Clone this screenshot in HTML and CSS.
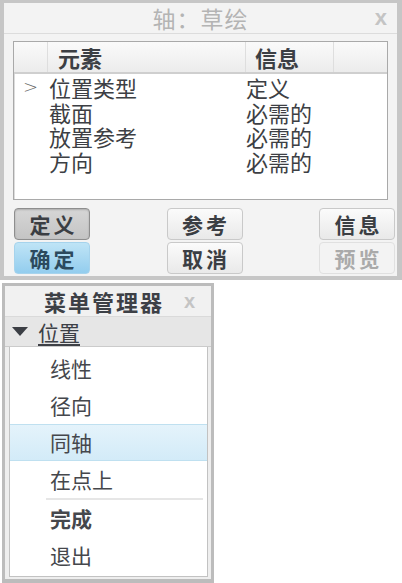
FILE: index.html
```html
<!DOCTYPE html>
<html lang="zh-CN">
<head>
    <meta charset="UTF-8">
    <title>轴: 草绘</title>
    <link rel="stylesheet" href="styles.css">
</head>
<body>
    <div class="dialog">
        <div class="dialog-title">
            <span class="title-text">轴：草绘</span>
            <span class="close">x</span>
        </div>

        <div class="table-box">
            <div class="table-head">
                <div class="col col-mark"></div>
                <div class="col col-name">元素</div>
                <div class="col col-info">信息</div>
                <div class="col col-rest"></div>
            </div>
            <div class="table-body">
                <div class="row">
                    <div class="col-mark mark">&gt;</div>
                    <div class="col-name">位置类型</div>
                    <div class="col-info">定义</div>
                </div>
                <div class="row">
                    <div class="col-mark"></div>
                    <div class="col-name">截面</div>
                    <div class="col-info">必需的</div>
                </div>
                <div class="row">
                    <div class="col-mark"></div>
                    <div class="col-name">放置参考</div>
                    <div class="col-info">必需的</div>
                </div>
                <div class="row">
                    <div class="col-mark"></div>
                    <div class="col-name">方向</div>
                    <div class="col-info">必需的</div>
                </div>
            </div>
        </div>

        <div class="buttons">
            <div class="btn-col">
                <button class="btn btn-pressed">定义</button>
                <button class="btn btn-blue">确定</button>
            </div>
            <div class="btn-col">
                <button class="btn">参考</button>
                <button class="btn">取消</button>
            </div>
            <div class="btn-col">
                <button class="btn">信息</button>
                <button class="btn btn-disabled">预览</button>
            </div>
        </div>
    </div>

    <div class="menu">
        <div class="menu-title">
            <span class="menu-title-text">菜单管理器</span>
            <span class="close menu-close">x</span>
        </div>
        <div class="menu-head">
            <span class="arrow"></span>
            <span class="menu-head-text">位置</span>
        </div>
        <div class="menu-list">
            <div class="menu-item">线性</div>
            <div class="menu-item">径向</div>
            <div class="menu-item selected">同轴</div>
            <div class="menu-item">在点上</div>
            <div class="menu-sep"></div>
            <div class="menu-item bold">完成</div>
            <div class="menu-item">退出</div>
        </div>
    </div>
</body>
</html>
```

FILE: styles.css
```css
* {
    margin: 0;
    padding: 0;
    box-sizing: border-box;
}

body {
    font-family: "Noto Sans CJK SC", "Noto Sans", sans-serif;
    background: #ffffff;
    color: #3a3d42;
    width: 402px;
    height: 583px;
    overflow: hidden;
}

.dialog {
    width: 402px;
    height: 280px;
    background: #f3f3f3;
    border: 4px solid #c6c6c6;
    border-top-width: 3px;
    border-right-width: 5px;
}

.dialog-title {
    height: 31px;
    display: flex;
    align-items: center;
    justify-content: center;
    position: relative;
    border-bottom: 1px solid #dcdcdc;
}

.title-text {
    font-size: 23px;
    line-height: 30px;
    color: #b4b4b4;
    letter-spacing: 1px;
}

.close {
    position: absolute;
    right: 10px;
    top: 0;
    font-family: "Liberation Sans", sans-serif;
    font-size: 22px;
    font-weight: bold;
    line-height: 30px;
    color: #c4c4c4;
}

.table-box {
    margin: 7px 9px 0 9px;
    height: 159px;
    background: #ffffff;
    border: 1px solid #a9a9a9;
    box-shadow: inset 1px 1px 0 #dcdcdc;
}

.table-head {
    display: flex;
    height: 32px;
    background: linear-gradient(#fafafa, #ececec);
    border-bottom: 2px solid #cfcfcf;
}

.table-head .col {
    border-right: 1px solid #dedede;
    font-size: 22px;
    font-weight: bold;
    line-height: 30px;
    color: #3c3f44;
}

.col-mark {
    width: 34px;
    flex: none;
}

.col-name {
    width: 198px;
    flex: none;
    padding-left: 1px;
}

.table-head .col-name {
    padding-left: 10px;
}

.col-info {
    width: 88px;
    flex: none;
}

.table-head .col-info {
    padding-left: 9px;
}

.col-rest {
    flex: 1;
}

.table-head .col-rest {
    border-right: none;
}

.table-body {
    padding-top: 1px;
}

.row {
    display: flex;
    height: 24.5px;
    font-size: 22px;
    line-height: 24.5px;
    color: #3d3f44;
}

.mark {
    font-family: "DejaVu Sans", sans-serif;
    font-size: 18px;
    color: #666;
    padding-left: 9px;
    font-weight: 300;
}

.buttons {
    display: flex;
    justify-content: space-between;
    padding: 8px 2px 0 10px;
}

.btn-col {
    display: flex;
    flex-direction: column;
    gap: 2px;
}

.btn {
    width: 76px;
    height: 32px;
    font-family: "Noto Sans CJK SC", sans-serif;
    font-size: 21px;
    font-weight: bold;
    letter-spacing: 3px;
    padding-left: 3px;
    color: #3b3e43;
    background: linear-gradient(#fbfbfb, #e9e9e9);
    border: 1px solid #c9c9c9;
    border-radius: 4px;
}

.btn-pressed {
    background: linear-gradient(#d6d6d6, #c4c4c4);
    border-color: #8e8e8e;
    box-shadow: inset 0 1px 2px rgba(0, 0, 0, 0.2);
}

.btn-blue {
    background: linear-gradient(#bfe4f6, #93cdee);
    border-color: #a6d3ec;
    color: #2c4a5e;
}

.btn-disabled {
    color: #aaaaaa;
    background: #f3f3f3;
    border-color: #e0e0e0;
}

.menu {
    width: 212px;
    height: 300px;
    margin: 3px 0 0 2px;
    background: #eeeeee;
    border: 3px solid #bcbcbc;
    border-bottom-width: 4px;
}

.menu-title {
    height: 30px;
    display: flex;
    align-items: center;
    justify-content: center;
    position: relative;
    padding-right: 8px;
    background: #f1f1f1;
}

.menu-title-text {
    font-size: 22px;
    font-weight: bold;
    line-height: 30px;
    color: #3d4046;
    letter-spacing: 2px;
}

.menu-close {
    right: 16px;
    font-size: 20px;
}

.menu-head {
    height: 31px;
    display: flex;
    align-items: center;
    gap: 10px;
    padding-left: 7px;
    background: #e6e6e6;
    border-top: 1px solid #dadada;
    border-bottom: 1px solid #cbcbcb;
}

.arrow {
    width: 0;
    height: 0;
    border-left: 8px solid transparent;
    border-right: 8px solid transparent;
    border-top: 9px solid #3b3e44;
}

.menu-head-text {
    font-size: 21px;
    color: #3d4046;
    text-decoration: underline;
    text-underline-offset: 3px;
    line-height: 28px;
}

.menu-list {
    margin: 0 3px 0 4px;
    height: 230px;
    padding-top: 3px;
    background: #ffffff;
    border: 1px solid #c2c2c2;
    border-top: none;
}

.menu-item {
    height: 37px;
    line-height: 36px;
    padding-left: 40px;
    font-size: 21px;
    color: #45474c;
}

.menu-item.selected {
    background: linear-gradient(#e4f3fb, #d3ebf8);
    border-top: 1px solid #bfe0f0;
    border-bottom: 1px solid #bfe0f0;
    line-height: 34px;
}

.menu-item.bold {
    font-weight: bold;
}

.menu-sep {
    height: 2px;
    margin: 0 4px 0 36px;
    background: #e6e6e6;
}
```
